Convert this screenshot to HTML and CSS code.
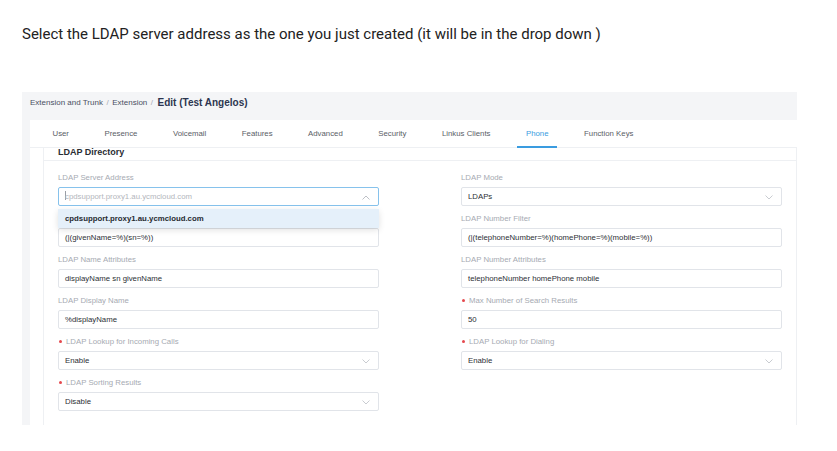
FILE: index.html
```html
<!DOCTYPE html>
<html lang="en">
<head>
    <meta charset="UTF-8">
    <title>LDAP Directory</title>
    <link rel="stylesheet" href="styles.css">
</head>
<body>
    <p class="caption">Select the LDAP server address as the one you just created (it will be in the drop down )</p>

    <div class="app">
        <div class="crumbs">
            <span>Extension and Trunk</span>
            <span class="sep">/</span>
            <span>Extension</span>
            <span class="sep">/</span>
            <span class="current">Edit (Test Angelos)</span>
        </div>

        <div class="panel">
            <div class="tabs">
                <span class="tab">User</span>
                <span class="tab">Presence</span>
                <span class="tab">Voicemail</span>
                <span class="tab">Features</span>
                <span class="tab">Advanced</span>
                <span class="tab">Security</span>
                <span class="tab">Linkus Clients</span>
                <span class="tab active">Phone</span>
                <span class="tab">Function Keys</span>
            </div>

            <div class="card">
                <div class="card-head"><span class="card-title">LDAP Directory</span></div>

                <div class="form">
                    <div class="field">
                        <div class="label">LDAP Server Address</div>
                        <div class="input select focused">
                            <span class="caret"></span><span class="muted">cpdsupport.proxy1.au.ycmcloud.com</span>
                            <svg class="chev" width="8" height="5" viewBox="0 0 8 5"><path d="M0.5 4.5 L4 1 L7.5 4.5" fill="none" stroke="#b5b9c0" stroke-width="0.9"/></svg>
                        </div>
                        <div class="dropdown">
                            <div class="option">cpdsupport.proxy1.au.ycmcloud.com</div>
                        </div>
                    </div>
                    <div class="field">
                        <div class="label">LDAP Mode</div>
                        <div class="input select">LDAPs
                            <svg class="chev" width="8" height="5" viewBox="0 0 8 5"><path d="M0.5 0.5 L4 4 L7.5 0.5" fill="none" stroke="#c3c6cc" stroke-width="0.9"/></svg>
                        </div>
                    </div>

                    <div class="field">
                        <div class="label">LDAP Name Filter</div>
                        <div class="input">(|(givenName=%)(sn=%))</div>
                    </div>
                    <div class="field">
                        <div class="label">LDAP Number Filter</div>
                        <div class="input">(|(telephoneNumber=%)(homePhone=%)(mobile=%))</div>
                    </div>

                    <div class="field">
                        <div class="label">LDAP Name Attributes</div>
                        <div class="input">displayName sn givenName</div>
                    </div>
                    <div class="field">
                        <div class="label">LDAP Number Attributes</div>
                        <div class="input">telephoneNumber homePhone mobile</div>
                    </div>

                    <div class="field">
                        <div class="label">LDAP Display Name</div>
                        <div class="input">%displayName</div>
                    </div>
                    <div class="field">
                        <div class="label required">Max Number of Search Results</div>
                        <div class="input">50</div>
                    </div>

                    <div class="field">
                        <div class="label required">LDAP Lookup for Incoming Calls</div>
                        <div class="input select">Enable
                            <svg class="chev" width="8" height="5" viewBox="0 0 8 5"><path d="M0.5 0.5 L4 4 L7.5 0.5" fill="none" stroke="#c3c6cc" stroke-width="0.9"/></svg>
                        </div>
                    </div>
                    <div class="field">
                        <div class="label required">LDAP Lookup for Dialing</div>
                        <div class="input select">Enable
                            <svg class="chev" width="8" height="5" viewBox="0 0 8 5"><path d="M0.5 0.5 L4 4 L7.5 0.5" fill="none" stroke="#c3c6cc" stroke-width="0.9"/></svg>
                        </div>
                    </div>

                    <div class="field">
                        <div class="label required">LDAP Sorting Results</div>
                        <div class="input select">Disable
                            <svg class="chev" width="8" height="5" viewBox="0 0 8 5"><path d="M0.5 0.5 L4 4 L7.5 0.5" fill="none" stroke="#c3c6cc" stroke-width="0.9"/></svg>
                        </div>
                    </div>
                </div>
            </div>
        </div>
    </div>
</body>
</html>
```

FILE: styles.css
```css
body {
    margin: 0;
    background: #fff;
    font-family: "Liberation Sans", Arial, sans-serif;
    color: #333;
}
.caption {
    margin: 0;
    padding: 26px 0 0 22px;
    font-family: Roboto, "Liberation Sans", sans-serif;
    font-size: 15px;
    line-height: 16px;
    color: #222;
}
.app {
    margin: 50px 0 0 22px;
    width: 775px;
    height: 333px;
    background: #f4f5f7;
    display: flex;
    flex-direction: column;
}
.crumbs {
    height: 28px;
    box-sizing: border-box;
    padding: 0 0 8px 8px;
    display: flex;
    align-items: center;
    gap: 3.5px;
    font-size: 8px;
    color: #4a5063;
}
.crumbs .sep {
    color: #a5a9b2;
}
.crumbs .current {
    font-size: 10px;
    font-weight: bold;
    color: #2c3550;
    margin-left: 1px;
}
.panel {
    flex: 1;
    margin-left: 8px;
    background: #fff;
    display: flex;
    flex-direction: column;
}
.tabs {
    height: 27px;
    padding-left: 14px;
    display: flex;
    gap: 18.5px;
    border-bottom: 1px solid #eef0f3;
}
.tab {
    padding: 0 8.5px;
    font-size: 7.8px;
    line-height: 28px;
    color: #5a5e66;
    border-bottom: 2px solid transparent;
    height: 28px;
    box-sizing: border-box;
}
.tab.active {
    color: #3a9ce0;
    border-bottom-color: #3a9ce0;
}
.card {
    flex: 1;
    margin-left: 13px;
    border-left: 1px solid #eef0f3;
    border-right: 1px solid #eef0f3;
}
.card-head {
    height: 12px;
    border-bottom: 1px solid #eef0f3;
    padding-left: 14px;
}
.card-title {
    display: block;
    font-size: 9px;
    font-weight: bold;
    line-height: 8px;
    color: #2a2d33;
}
.form {
    display: grid;
    grid-template-columns: 321px 321px;
    column-gap: 82px;
    padding: 11px 0 0 14px;
}
.field {
    position: relative;
    margin-bottom: 7px;
}
.label {
    font-size: 7.8px;
    line-height: 12px;
    color: #a6aab2;
    margin-bottom: 3px;
}
.label.required::before {
    content: "";
    display: inline-block;
    width: 3px;
    height: 3px;
    border-radius: 50%;
    background: #e5484d;
    margin: 0 4px 1px 1px;
    vertical-align: middle;
}
.input {
    position: relative;
    height: 19px;
    box-sizing: border-box;
    border: 1px solid #e1e4e9;
    border-radius: 2px;
    padding-left: 6px;
    font-size: 7.8px;
    line-height: 17px;
    color: #2c2f35;
}
.input.focused {
    border-color: #86c2ec;
}
.muted {
    color: #b3b6bc;
}
.caret {
    display: inline-block;
    width: 1px;
    height: 9px;
    background: #9a9ea5;
    vertical-align: -1px;
    margin-right: -1px;
}
.chev {
    position: absolute;
    right: 8px;
    top: 7px;
}
.dropdown {
    position: absolute;
    left: 0;
    right: 0;
    top: 37px;
    z-index: 2;
    background: #fff;
    box-shadow: 0 2px 6px rgba(0, 0, 0, 0.12);
}
.option {
    height: 19px;
    padding-left: 7px;
    background: #e5f0fa;
    font-size: 7.8px;
    font-weight: bold;
    line-height: 19px;
    color: #262a30;
}
```
